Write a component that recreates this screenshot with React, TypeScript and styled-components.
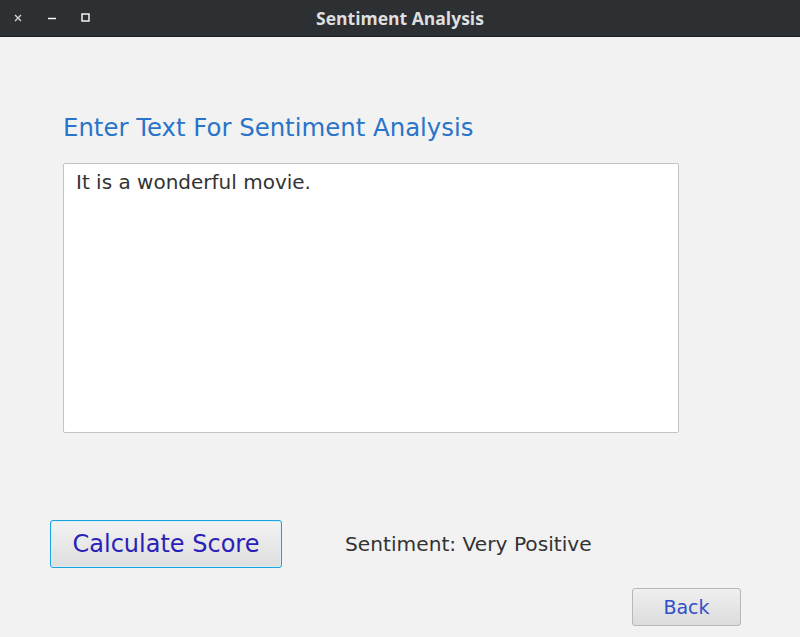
import React from "react";
import styled, { createGlobalStyle } from "styled-components";

const Global = createGlobalStyle`
  html, body { margin: 0; padding: 0; background: #f2f2f2; }
  body { font-family: "DejaVu Sans", sans-serif; }
  #root { width: 800px; height: 637px; }
`;

const Window = styled.div`
  width: 800px;
  height: 637px;
  display: flex;
  flex-direction: column;
  background: #f2f2f2;
  overflow: hidden;
`;

const TitleBar = styled.div`
  height: 36px;
  flex: 0 0 36px;
  background: #2d3033;
  border-bottom: 1px solid #1a1c1d;
  display: flex;
  align-items: center;
  position: relative;
`;

const Controls = styled.div`
  display: flex;
  align-items: center;
  padding-left: 12px;
`;

const Ctl = styled.div`
  width: 12px;
  height: 12px;
  margin-right: 22px;
  display: flex;
  align-items: center;
  justify-content: center;
`;

const Title = styled.div`
  position: absolute;
  left: 0;
  right: 0;
  top: 0;
  bottom: 0;
  display: flex;
  align-items: center;
  justify-content: center;
  color: #dfdfdf;
  font-family: "Open Sans", "DejaVu Sans", sans-serif;
  font-weight: 700;
  font-size: 17.5px;
  pointer-events: none;
`;

const Content = styled.div`
  flex: 1;
  display: flex;
  flex-direction: column;
`;

const Heading = styled.div`
  margin: 76px 0 0 63px;
  font-size: 24.4px;
  line-height: 30px;
  color: #2a74c9;
`;

const TextArea = styled.div`
  margin: 20px 0 0 63px;
  box-sizing: border-box;
  width: 616px;
  height: 270px;
  background: #ffffff;
  border: 1px solid #c4c4c4;
  border-radius: 2px;
  padding: 6px 12px;
  font-size: 20px;
  line-height: 24px;
  color: #333333;
`;

const ActionRow = styled.div`
  margin: 87px 0 0 50px;
  display: flex;
  align-items: center;
`;

const PrimaryButton = styled.div`
  width: 232px;
  height: 48px;
  box-sizing: border-box;
  border: 1px solid #1ba3e0;
  border-radius: 3px;
  box-shadow: inset 0 0 0 1px #d9eef8;
  background: linear-gradient(#f3f3f3, #dedede);
  display: flex;
  align-items: center;
  justify-content: center;
  color: #2a1fb8;
  font-size: 24px;
`;

const Result = styled.div`
  margin-left: 63px;
  font-size: 20.2px;
  color: #333333;
`;

const BackRow = styled.div`
  margin: 20px 0 0 0;
  display: flex;
  justify-content: flex-end;
  padding-right: 59px;
`;

const BackButton = styled.div`
  width: 109px;
  height: 38px;
  box-sizing: border-box;
  border: 1px solid #b8b8b8;
  border-radius: 3px;
  background: linear-gradient(#efefef, #dcdcdc);
  display: flex;
  align-items: center;
  justify-content: center;
  color: #2f50c8;
  font-size: 19px;
`;

export default function App() {
  return (
    <>
      <Global />
      <Window>
        <TitleBar>
          <Controls>
            <Ctl>
              <svg width="8" height="8" viewBox="0 0 8 8">
                <path d="M1 1L7 7M7 1L1 7" stroke="#d8d8d8" strokeWidth="1.3" />
              </svg>
            </Ctl>
            <Ctl>
              <svg width="10" height="10" viewBox="0 0 10 10">
                <path d="M1 5.5H9" stroke="#ffffff" strokeWidth="1.4" />
              </svg>
            </Ctl>
            <Ctl>
              <svg width="10" height="10" viewBox="0 0 10 10">
                <rect x="1" y="1" width="7" height="7" fill="none" stroke="#ffffff" strokeWidth="1.4" />
              </svg>
            </Ctl>
          </Controls>
          <Title>Sentiment Analysis</Title>
        </TitleBar>
        <Content>
          <Heading>Enter Text For Sentiment Analysis</Heading>
          <TextArea>It is a wonderful movie.</TextArea>
          <ActionRow>
            <PrimaryButton>Calculate Score</PrimaryButton>
            <Result>Sentiment: Very Positive</Result>
          </ActionRow>
          <BackRow>
            <BackButton>Back</BackButton>
          </BackRow>
        </Content>
      </Window>
    </>
  );
}
